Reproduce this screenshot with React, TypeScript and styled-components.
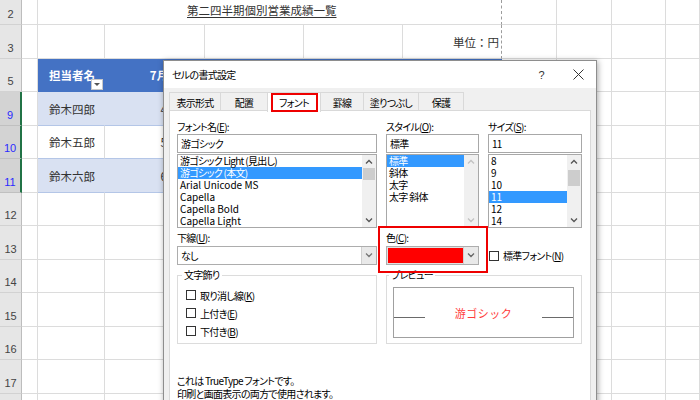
import React from "react";
import styled, { createGlobalStyle, css } from "styled-components";

const GlobalStyle = createGlobalStyle`
  html, body {
    margin: 0;
    padding: 0;
    background: #ffffff;
  }
  body {
    font-family: "Noto Sans CJK JP", "Liberation Sans", sans-serif;
  }
`;

const Screen = styled.div`
  position: relative;
  width: 700px;
  height: 400px;
  overflow: hidden;
  background: #ffffff;
`;

/* ---------- spreadsheet ---------- */

const Sheet = styled.div`
  display: grid;
  grid-template-columns: 22px 16px 67px 100px 99px 99px 99px 55px 55px 54px 1fr;
  grid-template-rows: 25px 34px 33px 34px 33px 34px 33px 34px 33px 34px 33px 34px 33px;
  font-family: "Noto Sans CJK JP", sans-serif;
  font-size: 11.5px;
  color: #333333;
`;

const RowHead = styled.div<{ $active?: boolean }>`
  display: flex;
  align-items: flex-end;
  justify-content: center;
  padding-bottom: 4px;
  box-sizing: border-box;
  font-family: "Liberation Sans", Arial, sans-serif;
  font-size: 11px;
  background: ${(p) => (p.$active ? "#d3d3d3" : "#e6e6e6")};
  color: ${(p) => (p.$active ? "#2a2aff" : "#444444")};
  border-bottom: 1px solid ${(p) => (p.$active ? "#c0c0c0" : "#d2d2d2")};
  border-right: ${(p) => (p.$active ? "2px solid #217346" : "1px solid #bdbdbd")};
`;

type Tone = "plain" | "head" | "band" | "table";

const tones: Record<Tone, { bg: string; right: string; bottom: string; color: string }> = {
  plain: { bg: "#ffffff", right: "#dcdcdc", bottom: "#dcdcdc", color: "#333333" },
  head: { bg: "#4472c4", right: "#4472c4", bottom: "#4472c4", color: "#ffffff" },
  band: { bg: "#d9e1f2", right: "#d9e1f2", bottom: "#b4c6e7", color: "#333333" },
  table: { bg: "#ffffff", right: "#dcdcdc", bottom: "#b4c6e7", color: "#333333" },
};

const Cell = styled.div<{
  $tone?: Tone;
  $align?: "left" | "center" | "right";
  $dashed?: boolean;
}>`
  position: relative;
  display: flex;
  align-items: center;
  justify-content: ${(p) =>
    p.$align === "right" ? "flex-end" : p.$align === "center" ? "center" : "flex-start"};
  padding: 0 2px 0 11px;
  box-sizing: border-box;
  white-space: nowrap;
  background: ${(p) => tones[p.$tone || "plain"].bg};
  color: ${(p) => tones[p.$tone || "plain"].color};
  font-weight: ${(p) => (p.$tone === "head" ? 700 : 400)};
  border-bottom: 1px solid ${(p) => tones[p.$tone || "plain"].bottom};
  border-right: 1px ${(p) => (p.$dashed ? "dashed #9c9c9c" : `solid ${tones[p.$tone || "plain"].right}`)};
`;

const TitleCell = styled(Cell)`
  grid-column: span 5;
  padding: 0 0 5px 149px;
  text-decoration: underline;
  text-underline-offset: 2px;
`;

const FilterButton = styled.span`
  position: absolute;
  right: 1px;
  bottom: 1px;
  width: 12px;
  height: 11px;
  box-sizing: border-box;
  background: #ffffff;
  border: 1px solid #c8c8c8;
  display: flex;
  align-items: center;
  justify-content: center;
  &::after {
    content: "";
    border-left: 3px solid transparent;
    border-right: 3px solid transparent;
    border-top: 3px solid #555555;
  }
`;

/* ---------- dialog ---------- */

const Dialog = styled.div`
  position: absolute;
  left: 163px;
  top: 60px;
  width: 434px;
  height: 360px;
  box-sizing: border-box;
  display: flex;
  flex-direction: column;
  background: #f0f0f0;
  border: 1px solid #8e8e8e;
  box-shadow: 1px 1px 6px rgba(0, 0, 0, 0.35);
  font-family: "Noto Sans CJK JP", sans-serif;
  font-feature-settings: "palt";
  font-size: 10px;
  letter-spacing: -0.7px;
  color: #000000;
`;

const TitleBar = styled.div`
  display: flex;
  align-items: center;
  height: 27px;
  padding: 0 12px 0 8px;
  background: #ffffff;
  font-size: 10px;
`;

const Help = styled.span`
  margin-left: auto;
  margin-right: 29px;
  font-family: "Liberation Sans", Arial, sans-serif;
  font-size: 11px;
  color: #333333;
`;

const Body = styled.div`
  flex: 1;
  display: flex;
  flex-direction: column;
  padding: 4px 5px 0 5px;
`;

const Tabs = styled.div`
  display: flex;
  height: 19px;
`;

const Tab = styled.div<{ $w: number; $active?: boolean }>`
  position: relative;
  z-index: ${(p) => (p.$active ? 1 : 0)};
  width: ${(p) => p.$w}px;
  margin-right: -1px;
  box-sizing: border-box;
  display: flex;
  align-items: center;
  justify-content: center;
  border: 1px solid #d9d9d9;
  border-bottom: none;
  background: ${(p) => (p.$active ? "#ffffff" : "#f0f0f0")};
  ${(p) =>
    p.$active &&
    css`
      height: 20px;
      &::after {
        content: "";
        position: absolute;
        top: 0;
        left: 3px;
        right: 2px;
        bottom: 0;
        border: 2px solid #ee0000;
      }
    `}
`;

const Panel = styled.div`
  position: relative;
  flex: 1;
  margin-top: -1px;
  background: #ffffff;
  border: 1px solid #d9d9d9;
  padding: 9px 7px 0 7px;
`;

const FormGrid = styled.div`
  display: grid;
  grid-template-columns: 200px 93px 94px;
  column-gap: 9px;
  row-gap: 3px;
`;

const Field = styled.div`
  display: flex;
  flex-direction: column;
`;

const Label = styled.div`
  height: 14px;
  line-height: 14px;
  white-space: nowrap;
`;

const TextBox = styled.div`
  height: 19px;
  box-sizing: border-box;
  border: 1px solid #a8a8a8;
  padding: 0 3px;
  line-height: 17px;
`;

const ListBox = styled.div`
  display: flex;
  height: 74px;
  margin-top: 1px;
  box-sizing: border-box;
  border: 1px solid #a8a8a8;
`;

const Items = styled.div`
  flex: 1;
  overflow: hidden;
`;

const Item = styled.div<{ $selected?: boolean; $latin?: boolean }>`
  height: 12px;
  line-height: 12px;
  padding-left: 2px;
  white-space: nowrap;
  letter-spacing: ${(p) => (p.$latin ? "0" : "-0.7px")};
  background: ${(p) => (p.$selected ? "#3399ff" : "transparent")};
  color: ${(p) => (p.$selected ? "#ffffff" : "#000000")};
`;

const ScrollBar = styled.div`
  width: 14px;
  display: flex;
  flex-direction: column;
  background: #f0f0f0;
`;

const ScrollArrow = styled.div`
  height: 13px;
  display: flex;
  align-items: center;
  justify-content: center;
`;

const Track = styled.div`
  flex: 1;
`;

const Thumb = styled.div<{ $top: number; $h: number }>`
  margin: ${(p) => p.$top}px 1px 0;
  height: ${(p) => p.$h}px;
  background: #cdcdcd;
`;

const Combo = styled.div<{ $gray?: boolean }>`
  display: flex;
  height: 19px;
  margin-top: 1px;
  box-sizing: border-box;
  border: 1px solid #adadad;
  background: ${(p) => (p.$gray ? "#e1e1e1" : "#ffffff")};
`;

const ComboText = styled.div`
  flex: 1;
  padding-left: 3px;
  line-height: 17px;
`;

const Swatch = styled.div`
  flex: 1;
  margin: 1px 0 1px 1px;
  background: #ff0000;
`;

const ComboButton = styled.div`
  width: 14px;
  display: flex;
  align-items: center;
  justify-content: center;
  background: #e9e9e9;
  border-left: 1px solid #d0d0d0;
`;

const CheckRow = styled.label`
  display: flex;
  align-items: center;
  gap: 4px;
  height: 18px;
  white-space: nowrap;
`;

const SideCheck = styled(CheckRow)`
  align-self: end;
  height: 19px;
  margin-left: 1px;
`;

const Box = styled.span`
  flex: none;
  width: 10px;
  height: 10px;
  box-sizing: border-box;
  border: 1px solid #333333;
  background: #ffffff;
`;

const GroupBox = styled.fieldset<{ $wide?: boolean }>`
  margin: 0;
  min-width: 0;
  border: 1px solid #dcdcdc;
  padding: ${(p) => (p.$wide ? "5px 7px 5px 6px" : "4px 8px 3px 8px")};
  ${(p) =>
    p.$wide &&
    css`
      grid-column: 2 / 4;
    `}
`;

const Legend = styled.legend`
  padding: 0 2px;
  margin-left: -4px;
  line-height: 14px;
`;

const PreviewBox = styled.div`
  display: flex;
  align-items: center;
  height: 51px;
  box-sizing: border-box;
  border: 1px solid #a0a0a0;
`;

const PreviewLine = styled.span`
  width: 31px;
  height: 1px;
  margin-top: 9px;
  background: #6a6a6a;
`;

const PreviewText = styled.span`
  flex: 1;
  text-align: center;
  font-feature-settings: normal;
  font-size: 11px;
  letter-spacing: 0.5px;
  color: #ff3c3c;
`;

const Note = styled.div`
  margin-top: 30px;
  line-height: 13px;
`;

const Highlight = styled.div`
  position: absolute;
  left: 208px;
  top: 115px;
  width: 110px;
  height: 47px;
  box-sizing: border-box;
  border: 2px solid #ee0000;
  pointer-events: none;
`;

const Chevron = ({ up, color = "#444" }: { up?: boolean; color?: string }) => (
  <svg width="8" height="5" viewBox="0 0 8 5">
    <polyline
      points={up ? "1,4.5 4,1.5 7,4.5" : "1,0.5 4,3.5 7,0.5"}
      fill="none"
      stroke={color}
      strokeWidth="1.3"
    />
  </svg>
);

const CloseIcon = () => (
  <svg width="11" height="11" viewBox="0 0 11 11">
    <path d="M0.5 0.5 L10.5 10.5 M10.5 0.5 L0.5 10.5" stroke="#333" strokeWidth="1" />
  </svg>
);

const Scroll = ({ thumb, disabled }: { thumb?: { top: number; h: number }; disabled?: boolean }) => {
  const c = disabled ? "#c2c2c2" : "#555";
  return (
    <ScrollBar>
      <ScrollArrow>
        <Chevron up color={c} />
      </ScrollArrow>
      <Track>{thumb && <Thumb $top={thumb.top} $h={thumb.h} />}</Track>
      <ScrollArrow>
        <Chevron color={c} />
      </ScrollArrow>
    </ScrollBar>
  );
};

/* ---------- data ---------- */

const tail = ["g", "h", "i", "j"];

const people = [
  { row: 9, name: "鈴木四郎", tone: "band" as Tone, values: ["452,000", "498,000", "510,000", "1,460,000"] },
  { row: 10, name: "鈴木五郎", tone: "table" as Tone, values: ["538,000", "521,000", "547,000", "1,606,000"] },
  { row: 11, name: "鈴木六郎", tone: "band" as Tone, values: ["615,000", "602,000", "638,000", "1,855,000"] },
];

const emptyRows = [12, 13, 14, 15, 16, 17, 18];

const tabs = [
  { label: "表示形式", w: 52 },
  { label: "配置", w: 48 },
  { label: "フォント", w: 54, active: true },
  { label: "罫線", w: 44 },
  { label: "塗りつぶし", w: 56 },
  { label: "保護", w: 46 },
];

const fonts = ["游ゴシック Light (見出し)", "游ゴシック (本文)", "Arial Unicode MS", "Capella", "Capella Bold", "Capella Light"];
const styles = ["標準", "斜体", "太字", "太字 斜体"];
const sizes = ["8", "9", "10", "11", "12", "14"];

const isLatin = (s: string) => /^[\x00-\x7F]+$/.test(s);

const Tail = () => (
  <>
    {tail.map((k) => (
      <Cell key={k} />
    ))}
  </>
);

const App = () => {
  return (
    <Screen>
      <GlobalStyle />
      <Sheet>
        {/* row 2 */}
        <RowHead>2</RowHead>
        <Cell />
        <TitleCell $dashed>第二四半期個別営業成績一覧</TitleCell>
        <Tail />

        {/* row 3 */}
        <RowHead>3</RowHead>
        <Cell />
        <Cell />
        <Cell />
        <Cell />
        <Cell />
        <Cell $align="right" $dashed>
          単位：円
        </Cell>
        <Tail />

        {/* row 5 */}
        <RowHead>5</RowHead>
        <Cell />
        <Cell $tone="head">
          担当者名
          <FilterButton />
        </Cell>
        <Cell $tone="head" $align="center">
          7月
        </Cell>
        <Cell $tone="head" $align="center">
          8月
        </Cell>
        <Cell $tone="head" $align="center">
          9月
        </Cell>
        <Cell $tone="head" $align="center">
          合計
        </Cell>
        <Tail />

        {people.map((p) => (
          <React.Fragment key={p.row}>
            <RowHead $active>{p.row}</RowHead>
            <Cell />
            <Cell $tone={p.tone}>{p.name}</Cell>
            {p.values.map((v) => (
              <Cell key={v} $tone={p.tone} $align="right">
                {v}
              </Cell>
            ))}
            <Tail />
          </React.Fragment>
        ))}

        {emptyRows.map((r) => (
          <React.Fragment key={r}>
            <RowHead>{r}</RowHead>
            <Cell />
            <Cell />
            <Cell />
            <Cell />
            <Cell />
            <Cell $dashed />
            <Tail />
          </React.Fragment>
        ))}
      </Sheet>

      <Dialog>
        <TitleBar>
          セルの書式設定
          <Help>?</Help>
          <CloseIcon />
        </TitleBar>
        <Body>
          <Tabs>
            {tabs.map((t) => (
              <Tab key={t.label} $w={t.w} $active={t.active}>
                {t.label}
              </Tab>
            ))}
          </Tabs>
          <Panel>
            <FormGrid>
              <Field>
                <Label>
                  フォント名(<u>E</u>):
                </Label>
                <TextBox>游ゴシック</TextBox>
                <ListBox>
                  <Items>
                    {fonts.map((f, i) => (
                      <Item key={f} $selected={i === 1} $latin={isLatin(f)}>
                        {f}
                      </Item>
                    ))}
                  </Items>
                  <Scroll thumb={{ top: 0, h: 12 }} />
                </ListBox>
              </Field>
              <Field>
                <Label>
                  スタイル(<u>O</u>):
                </Label>
                <TextBox>標準</TextBox>
                <ListBox>
                  <Items>
                    {styles.map((s, i) => (
                      <Item key={s} $selected={i === 0}>
                        {s}
                      </Item>
                    ))}
                  </Items>
                  <Scroll disabled />
                </ListBox>
              </Field>
              <Field>
                <Label>
                  サイズ(<u>S</u>):
                </Label>
                <TextBox>11</TextBox>
                <ListBox>
                  <Items>
                    {sizes.map((s) => (
                      <Item key={s} $selected={s === "11"} $latin>
                        {s}
                      </Item>
                    ))}
                  </Items>
                  <Scroll thumb={{ top: 2, h: 16 }} />
                </ListBox>
              </Field>

              <Field>
                <Label>
                  下線(<u>U</u>):
                </Label>
                <Combo>
                  <ComboText>なし</ComboText>
                  <ComboButton>
                    <Chevron color="#777" />
                  </ComboButton>
                </Combo>
              </Field>
              <Field>
                <Label>
                  色(<u>C</u>):
                </Label>
                <Combo $gray>
                  <Swatch />
                  <ComboButton>
                    <Chevron color="#666" />
                  </ComboButton>
                </Combo>
              </Field>
              <SideCheck>
                <Box />
                <span>
                  標準フォント(<u>N</u>)
                </span>
              </SideCheck>

              <GroupBox>
                <Legend>文字飾り</Legend>
                <CheckRow>
                  <Box />
                  <span>
                    取り消し線(<u>K</u>)
                  </span>
                </CheckRow>
                <CheckRow>
                  <Box />
                  <span>
                    上付き(<u>E</u>)
                  </span>
                </CheckRow>
                <CheckRow>
                  <Box />
                  <span>
                    下付き(<u>B</u>)
                  </span>
                </CheckRow>
              </GroupBox>
              <GroupBox $wide>
                <Legend>プレビュー</Legend>
                <PreviewBox>
                  <PreviewLine />
                  <PreviewText>游ゴシック</PreviewText>
                  <PreviewLine />
                </PreviewBox>
              </GroupBox>
            </FormGrid>
            <Note>
              これは TrueType フォントです。
              <br />
              印刷と画面表示の両方で使用されます。
            </Note>
            <Highlight />
          </Panel>
        </Body>
      </Dialog>
    </Screen>
  );
};

export default App;
